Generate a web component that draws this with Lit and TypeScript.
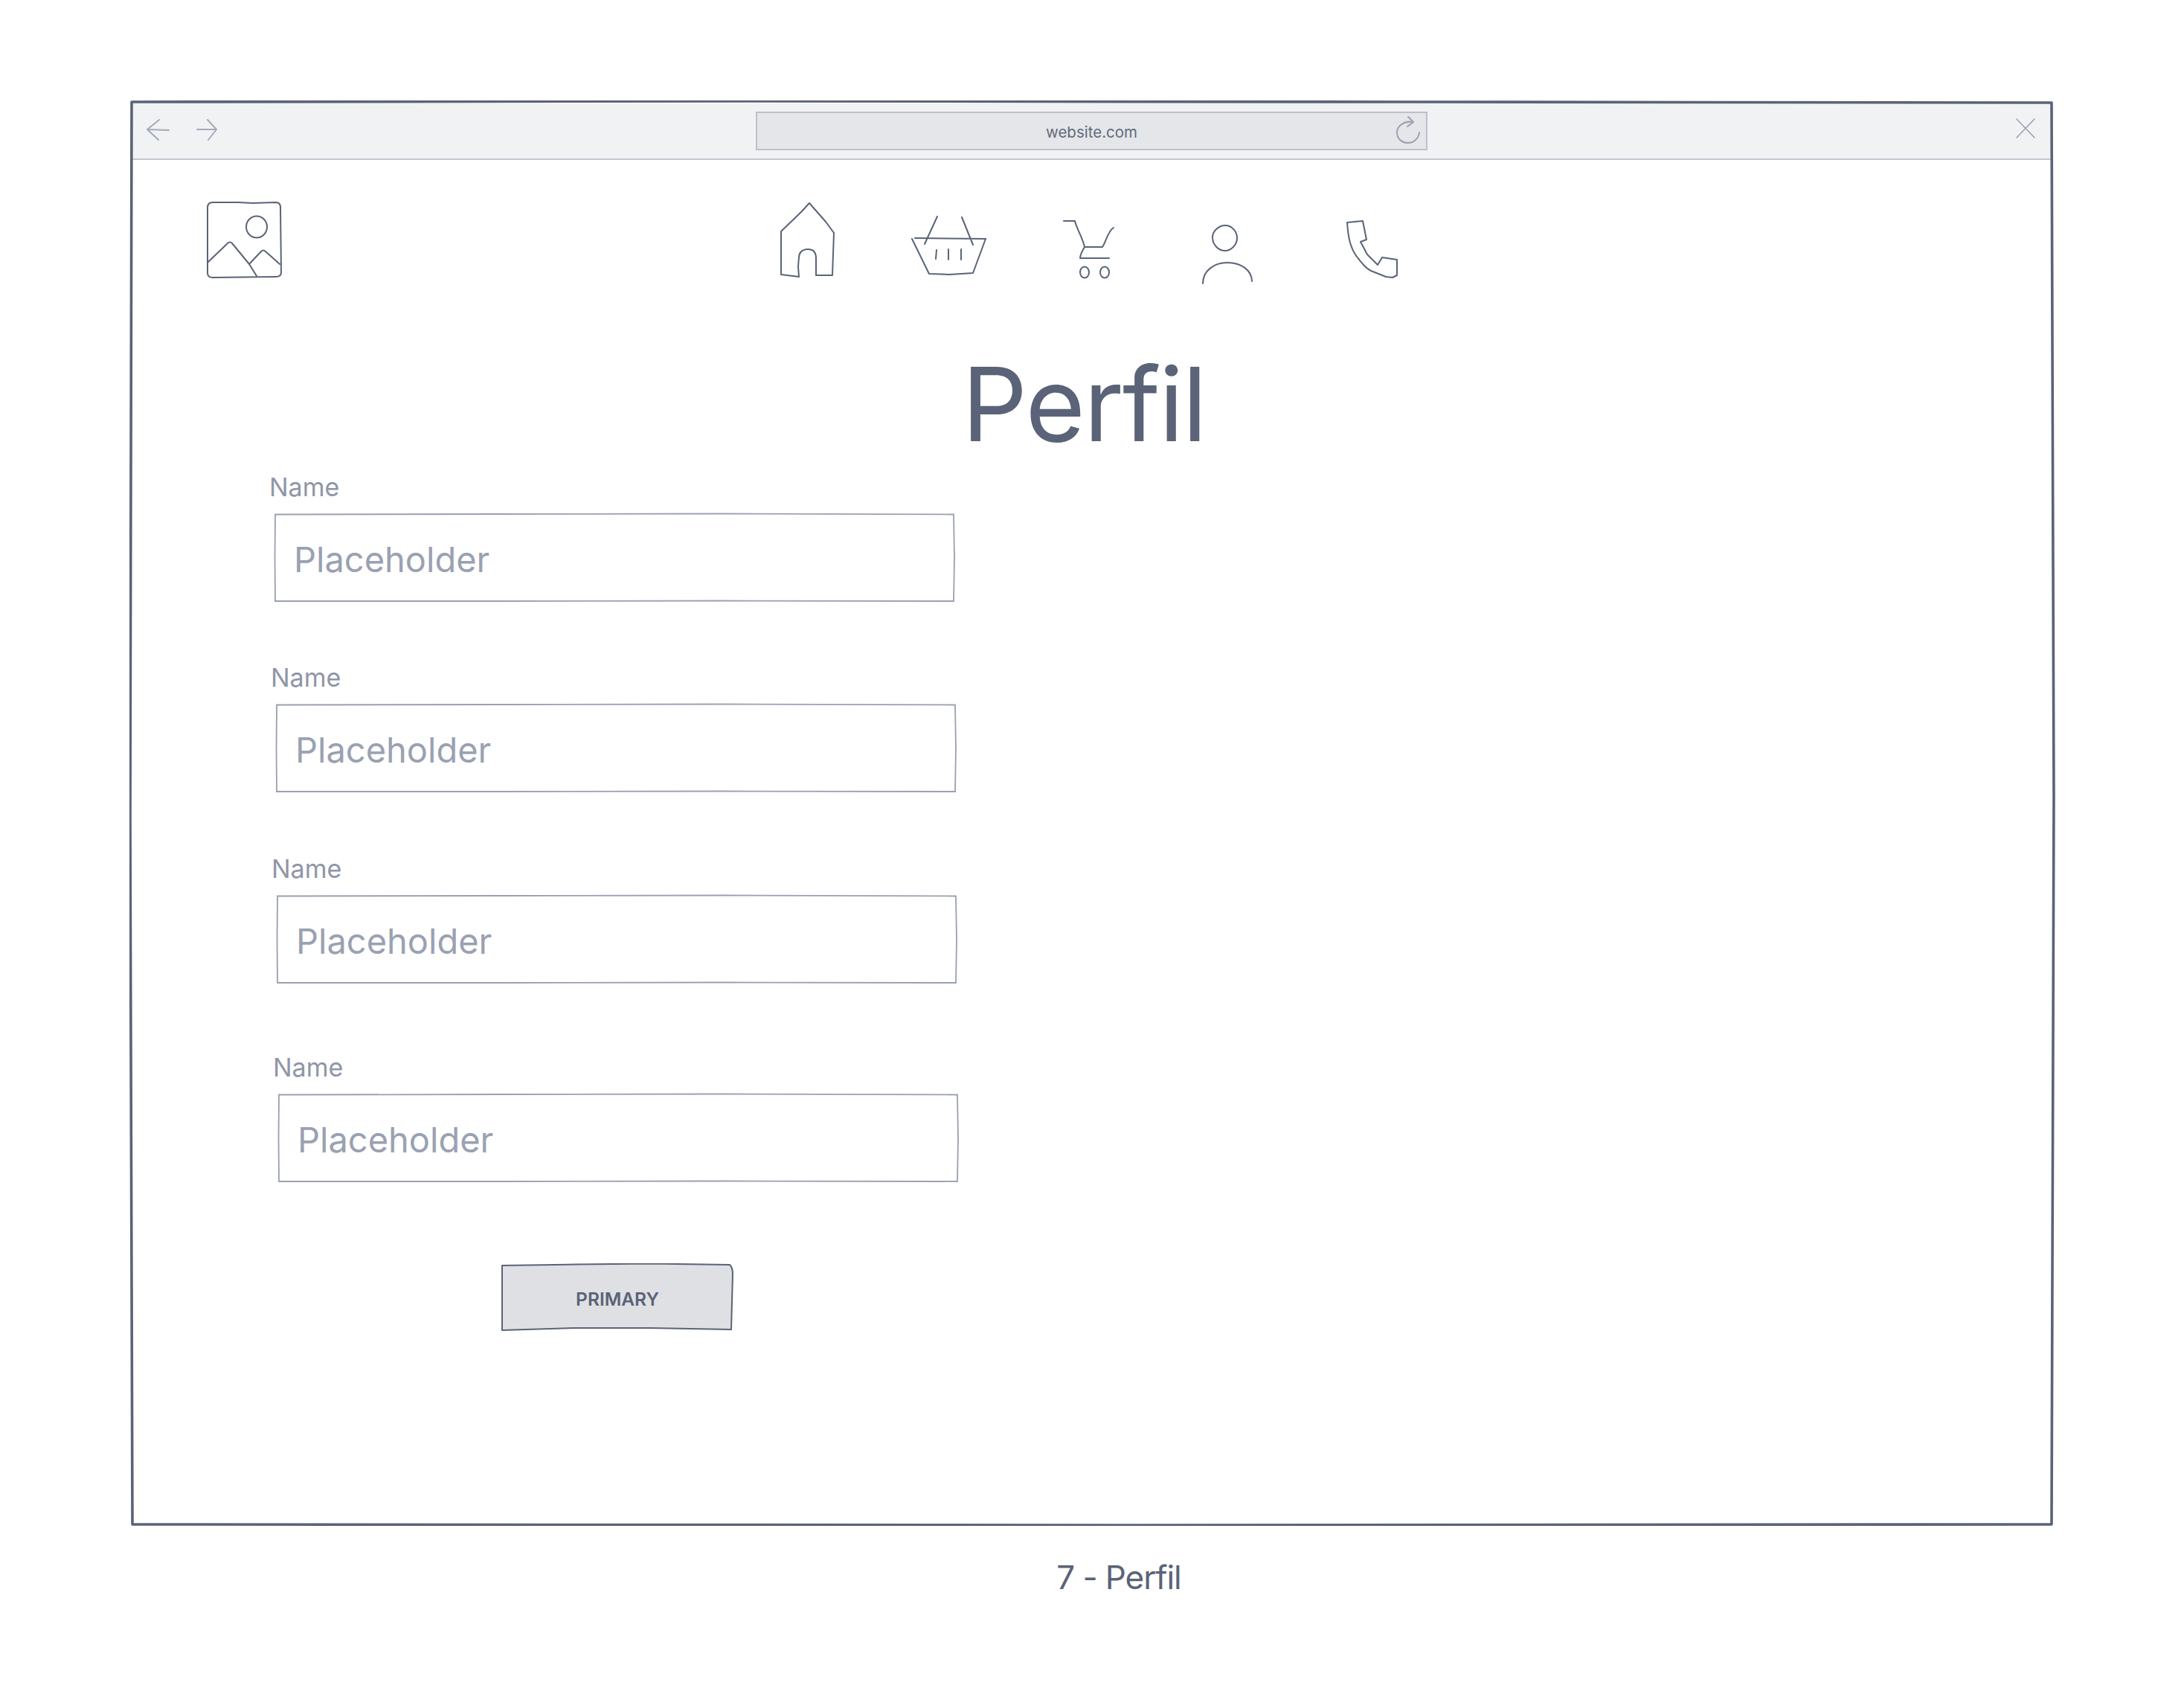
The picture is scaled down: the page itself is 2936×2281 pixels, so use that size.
import { LitElement, html, css, svg } from "lit";
import { customElement } from "lit/decorators.js";

const FIELDS = [{ x: 0 }, { x: 2 }, { x: 3 }, { x: 5 }];

const ICON = (x: number, w: number, cls: string, body: unknown) => html`<svg class="icon ${cls}" width=${w} height="120" viewBox="${x} 265 ${w} 120" fill="none" stroke="#5a6377" stroke-width="2" stroke-linecap="round" stroke-linejoin="round">${body}</svg>`;

@customElement("app-root")
export class AppRoot extends LitElement {
  static styles = css`
    :host { display: block; width: 2936px; height: 2281px; background: #fff; font-family: Inter, "Liberation Sans", sans-serif; color: #5a6377; }
    .page { padding: 135px 0 0 174px; }
    .window { position: relative; width: 2589px; height: 1916px; box-sizing: border-box; padding: 4px 3px 0 3px; }
    .frame { position: absolute; inset: 0; pointer-events: none; }
    .bar { height: 74px; margin-left: 1px; margin-right: 1px; background: #f1f2f4; border-bottom: 2px solid #c3c6d0; display: flex; align-items: flex-start; position: relative; }
    .bar svg { display: block; flex: none; }
    .nav { margin-left: 17px; margin-top: 16px; }
    .address { position: absolute; left: 838px; top: 11px; width: 903px; height: 52px; box-sizing: border-box; background: #e5e6e9; border: 2px solid #bcc0cb; display: flex; align-items: center; justify-content: center; font-size: 20.5px; color: #636b7e; line-height: 52px; }
    .address span { transform: translateY(2px); }
    .reload { position: absolute; right: 3px; top: 1px; }
    .close { position: absolute; right: 21px; top: 18px; }
    .header { display: flex; height: 120px; margin-top: 50px; }
    .icon { display: block; flex: none; }
    .i-image { margin-left: 97px; }
    .i-home { margin-left: 666px; }
    .i-basket { margin-left: 100px; }
    .i-cart { margin-left: 100px; }
    .i-user { margin-left: 116px; }
    .i-phone { margin-left: 123px; }
    h1 { margin: 74px 0 0; font-weight: 400; font-size: 138px; line-height: 168px; height: 168px; text-align: center; padding-right: 23px; letter-spacing: -2px; color: #5a6377; }
    .form { display: flex; flex-direction: column; margin-top: 8px; }
    .field { display: flex; flex-direction: column; align-items: flex-start; }
    .field + .field { margin-top: 82px; }
    .field:nth-child(3) { margin-top: 83px; }
    .field:nth-child(4) { margin-top: 93px; }
    .label { font-size: 34px; line-height: 40px; color: #8f96a8; margin-left: 185px; height: 40px; }
    .box { position: relative; margin-left: 192px; margin-top: 15px; width: 915px; height: 119px; display: flex; align-items: center; box-sizing: border-box; padding-left: 26px; padding-top: 3px; font-size: 47px; color: #9aa1b1; }
    .box svg { position: absolute; inset: 0; overflow: visible; }
    .action { position: relative; margin-left: 497px; margin-top: 109px; width: 312px; height: 92px; display: flex; align-items: center; justify-content: center; padding-top: 3px; box-sizing: border-box; font-size: 24.5px; font-weight: 600; color: #5a6377; }
    .action svg { position: absolute; inset: 0; }
    .action span { position: relative; }
    .caption { font-size: 44px; line-height: 54px; text-align: center; padding-left: 72px; margin: 42px 0 0 -174px; letter-spacing: -1.1px; color: #5a6377; }
  `;

  render() {
    return html`<div class="page">
      <div class="window">
        <div class="bar">
          <svg class="nav" width="105" height="45" viewBox="195 155 105 45" fill="none" stroke="#a4aaba" stroke-width="2" stroke-linecap="round" stroke-linejoin="round">
            <path d="M214 161 L198 174 L213 188 M198 174 L227 175" />
            <path d="M265 174 L291 174 M279 161 L291 174 L280 188" />
          </svg>
          <div class="address"><span>website.com</span>
            <svg class="reload" width="40" height="46" viewBox="1874 152 40 46" fill="none" stroke="#9aa1b1" stroke-width="2" stroke-linecap="round" stroke-linejoin="round">
              <path d="M1900 163 C1888 161 1878 168 1878 177 C1878 186 1885 191 1893 191 C1901 191 1907 185 1908 177" />
              <path d="M1893 156 L1900 163 L1892 169" />
            </svg>
          </div>
          <svg class="close" width="30" height="30" viewBox="2708 158 30 30" fill="none" stroke="#9aa1b1" stroke-width="1.6" stroke-linecap="round">
            <path d="M2711 161 L2735 186 M2735 161 L2711 186" />
          </svg>
        </div>
        <div class="header">
          ${ICON(274, 108, "i-image", svg`
            <path d="M286 272 L320 272 L340 273 L371 272 Q377 272 377 279 L378 366 Q378 372 371 372 L286 373 Q279 373 279 367 L279 279 Q279 272 286 272 Z" />
            <ellipse cx="345" cy="305" rx="14" ry="14.5" />
            <path d="M280 352 L306 327 Q309 324 312 327 L335 355 L345 371 M335 355 L351 338 Q354 335 357 338 L376 355" />`)}
          ${ICON(1048, 76, "i-home", svg`
            <path d="M1088 273 L1110 298 L1121 313 L1119 370 L1097 370 L1097 347 C1097 339 1093 335 1086 335 C1078 335 1074 340 1074 346 L1073 358 L1074 372 L1050 369 L1050 311 L1077 285 Z" />`)}
          ${ICON(1224, 104, "i-basket", svg`
            <path d="M1260 291 L1243 328 M1293 292 L1308 329 M1230 320 L1325 321" />
            <path d="M1226 321 L1249 368 L1276 369 L1308 367 L1325 321" />
            <path d="M1259 336 L1258 348 M1275 335 L1275 349 M1292 335 L1292 349" />`)}
          ${ICON(1428, 71, "i-cart", svg`
            <path d="M1430 297 L1445 297 C1447 307 1455 318 1458 332 L1482 332 C1487 325 1489 311 1497 306" />
            <path d="M1458 332 C1455 337 1452 342 1452 347 L1491 347" />
            <ellipse cx="1458" cy="366" rx="6" ry="7.5" />
            <ellipse cx="1485" cy="366" rx="6" ry="7.5" />`)}
          ${ICON(1615, 71, "i-user", svg`
            <path d="M1647 303 C1656 303 1663 311 1663 320 C1663 330 1654 337 1647 337 C1638 337 1630 329 1630 319 C1630 311 1638 303 1647 303 Z" />
            <path d="M1617 381 C1617 364 1632 353 1650 353 C1668 353 1683 363 1683 378" />`)}
          ${ICON(1809, 72, "i-phone", svg`
            <path d="M1811 299 L1832 297 L1837 322 L1829 325 L1838 342 L1852 356 L1858 346 L1878 349 L1878 370 L1872 373 L1863 372 L1843 364 C1835 360 1832 355 1828 350 C1821 342 1818 335 1817 332 C1814 325 1812 315 1811 299 Z" />`)}
        </div>
        <h1>Perfil</h1>
        <div class="form">
          ${FIELDS.map((f) => html`<div class="field" style="transform: translateX(${f.x}px)">
            <div class="label">Name</div>
            <div class="box">Placeholder
              <svg width="915" height="119" viewBox="0 0 915 119" preserveAspectRatio="none" fill="none" stroke="#9aa0b0" stroke-width="1.8">
                <path d="M1 1.5 L300 1 L600 0.5 L913 1.5 L914 60 L913 118 L600 117.5 L300 118 L1 118 L0.5 60 Z" />
              </svg>
            </div>
          </div>`)}
          <div class="action">
            <svg width="312" height="92" viewBox="0 0 312 92" fill="#dfe0e4" stroke="#5a6377" stroke-width="2" stroke-linejoin="round">
              <path d="M1 3 L100 1.5 L200 0.5 L307 2 Q311 6 311 14 L309 89 L200 87 L100 87 L1 90 Z" />
            </svg>
            <span>PRIMARY</span>
          </div>
        </div>
        <svg class="frame" width="2589" height="1916" viewBox="174 135 2589 1916" fill="none" stroke="#5a6377" stroke-width="3.6" stroke-linejoin="round">
          <path d="M177 137 L1000 136 L1900 137 L2758 138 L2761 1070 L2758 2049 L1500 2050 L178 2049 L175 1100 Z" />
        </svg>
      </div>
      <div class="caption">7 - Perfil</div>
    </div>`;
  }
}
